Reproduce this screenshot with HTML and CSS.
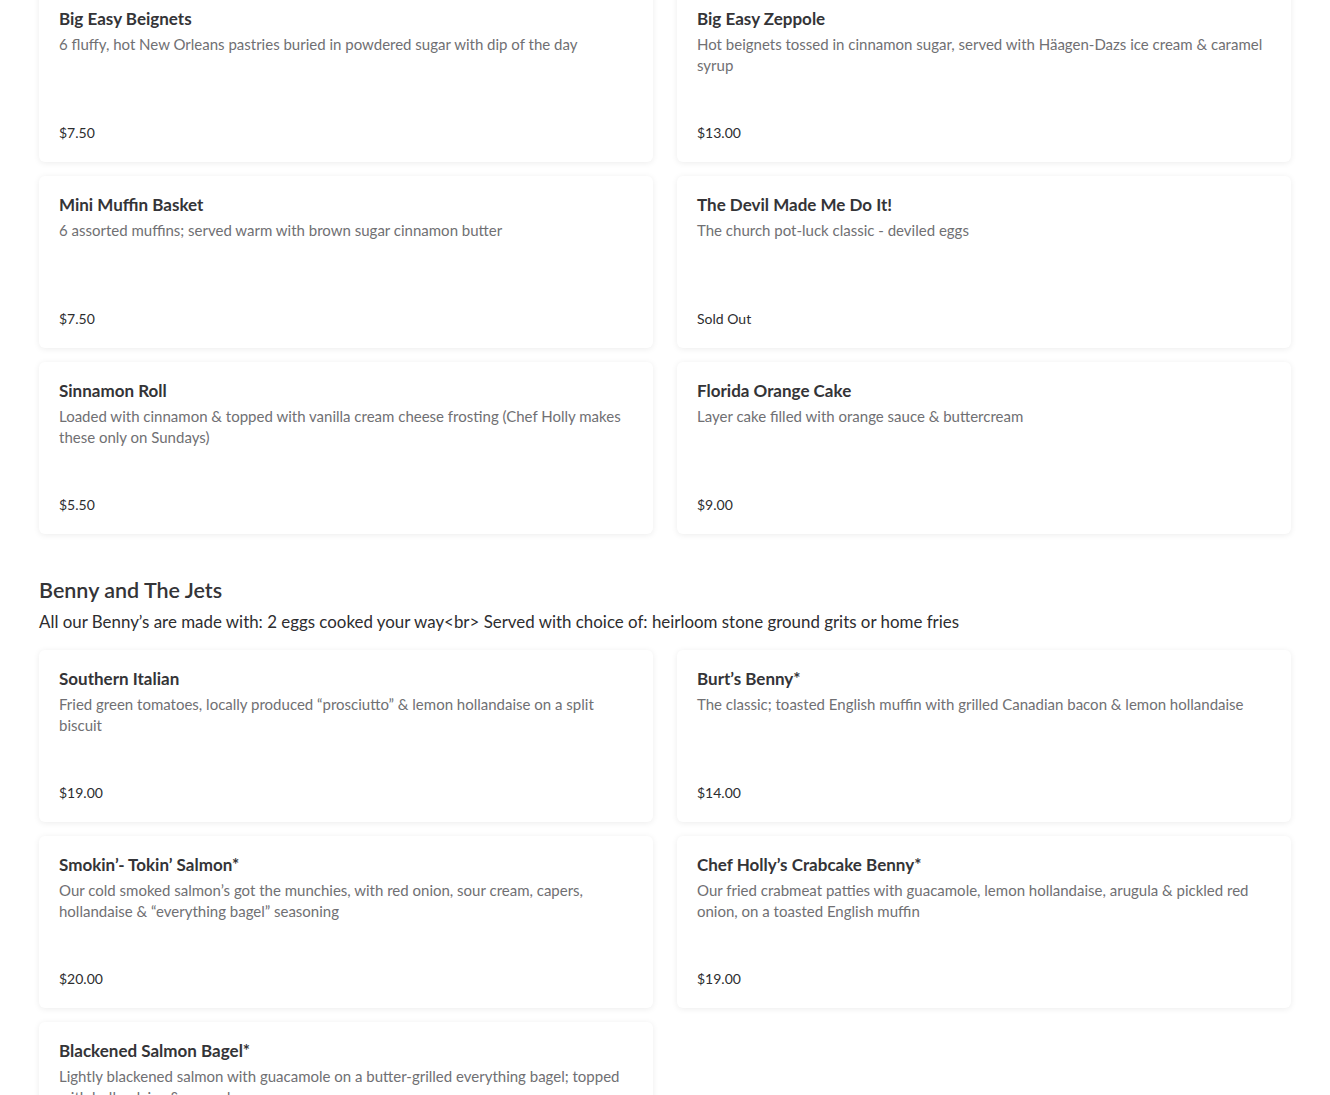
FILE: index.html
```
<!DOCTYPE html>
<html>
<head>
<meta charset="utf-8">
<link rel="stylesheet" href="styles.css">
</head>
<body>
<main class="menu">
  <section class="section section-first">
    <div class="grid">
      <div class="card"><div class="name">Big Easy Beignets</div><div class="desc">6 fluffy, hot New Orleans pastries buried in powdered sugar with dip of the day</div><div class="price">$7.50</div></div>
      <div class="card"><div class="name">Big Easy Zeppole</div><div class="desc">Hot beignets tossed in cinnamon sugar, served with Häagen-Dazs ice cream &amp; caramel syrup</div><div class="price">$13.00</div></div>
      <div class="card"><div class="name">Mini Muffin Basket</div><div class="desc">6 assorted muffins; served warm with brown sugar cinnamon butter</div><div class="price">$7.50</div></div>
      <div class="card"><div class="name">The Devil Made Me Do It!</div><div class="desc">The church pot-luck classic - deviled eggs</div><div class="price">Sold Out</div></div>
      <div class="card"><div class="name">Sinnamon Roll</div><div class="desc">Loaded with cinnamon &amp; topped with vanilla cream cheese frosting (Chef Holly makes these only on Sundays)</div><div class="price">$5.50</div></div>
      <div class="card"><div class="name">Florida Orange Cake</div><div class="desc">Layer cake filled with orange sauce &amp; buttercream</div><div class="price">$9.00</div></div>
    </div>
  </section>
  <section class="section">
    <h2 class="section-title">Benny and The Jets</h2>
    <p class="section-desc">All our Benny’s are made with: 2 eggs cooked your way&lt;br&gt; Served with choice of: heirloom stone ground grits or home fries</p>
    <div class="grid">
      <div class="card"><div class="name">Southern Italian</div><div class="desc">Fried green tomatoes, locally produced “prosciutto” &amp; lemon hollandaise on a split biscuit</div><div class="price">$19.00</div></div>
      <div class="card"><div class="name">Burt’s Benny*</div><div class="desc">The classic; toasted English muffin with grilled Canadian bacon &amp; lemon hollandaise</div><div class="price">$14.00</div></div>
      <div class="card"><div class="name">Smokin’- Tokin’ Salmon*</div><div class="desc">Our cold smoked salmon’s got the munchies, with red onion, sour cream, capers, hollandaise &amp; “everything bagel” seasoning</div><div class="price">$20.00</div></div>
      <div class="card"><div class="name">Chef Holly’s Crabcake Benny*</div><div class="desc">Our fried crabmeat patties with guacamole, lemon hollandaise, arugula &amp; pickled red onion, on a toasted English muffin</div><div class="price">$19.00</div></div>
      <div class="card"><div class="name">Blackened Salmon Bagel*</div><div class="desc">Lightly blackened salmon with guacamole on a butter-grilled everything bagel; topped with hollandaise &amp; avocado</div><div class="price">$19.00</div></div>
    </div>
  </section>
</main>
</body>
</html>
```
FILE: styles.css
```
html, body {
  margin: 0;
  padding: 0;
  background: #ffffff;
}
body {
  font-family: "Lato", "Liberation Sans", sans-serif;
  color: #2d2d2d;
  overflow: hidden;
}
.menu {
  padding: 0 39px;
}
.section-first {
  margin-top: -10px;
}
.grid {
  display: grid;
  grid-template-columns: 1fr 1fr;
  column-gap: 24px;
  row-gap: 14px;
}
.card {
  height: 172px;
  box-sizing: border-box;
  padding: 19px 20px 19px;
  background: #fff;
  border-radius: 6px;
  box-shadow: 0 1px 6px rgba(0, 0, 0, 0.08);
  display: flex;
  flex-direction: column;
}
.name {
  font-size: 17px;
  line-height: 20px;
  font-weight: 700;
  color: #343437;
}
.desc {
  margin-top: 5px;
  font-size: 15px;
  line-height: 21px;
  color: #707073;
}
.price {
  margin-top: auto;
  font-size: 14px;
  line-height: 20px;
  color: #2d2d2f;
}
.section-title {
  margin: 42px 0 0;
  font-size: 21.5px;
  line-height: 28px;
  font-weight: 600;
  color: #343437;
}
.section-desc {
  margin: 7px 0 17px;
  font-size: 16.9px;
  line-height: 22px;
  color: #2d2d2f;
}
```
